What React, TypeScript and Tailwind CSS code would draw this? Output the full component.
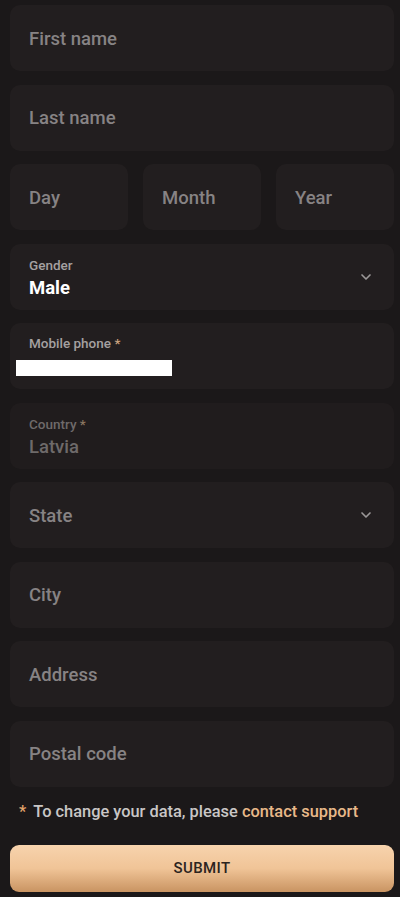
import { ChevronDown } from "lucide-react";

const font = { fontFamily: "Roboto, 'Liberation Sans', sans-serif" };

function Field({ placeholder }: { placeholder: string }) {
  return (
    <div className="h-[66px] rounded-[10px] bg-[#221e1f] flex items-center pl-[19px] pt-[3px]">
      <span className="text-[18.5px] font-medium text-[#878384]">{placeholder}</span>
    </div>
  );
}

function SelectField({ placeholder }: { placeholder: string }) {
  return (
    <div className="h-[66px] rounded-[10px] bg-[#221e1f] flex items-center justify-between pl-[19px] pr-[20px]">
      <span className="pt-[3px] text-[18.5px] font-medium text-[#878384]">{placeholder}</span>
      <ChevronDown size={16} strokeWidth={2.5} className="text-[#9b9898]" />
    </div>
  );
}

export default function App() {
  return (
    <main style={font} className="min-h-[897px] w-[400px] bg-[#1b1819] pl-[10px] pr-[6px] pt-[5px] flex flex-col">
      <div className="flex flex-col gap-[13.5px]">
        <Field placeholder="First name" />
        <Field placeholder="Last name" />
        <div className="grid grid-cols-3 gap-[15px]">
          <Field placeholder="Day" />
          <Field placeholder="Month" />
          <Field placeholder="Year" />
        </div>

        {/* gender select with value */}
        <div className="h-[66px] rounded-[10px] bg-[#221e1f] flex items-center justify-between pl-[19px] pr-[20px]">
          <div className="flex flex-col pt-[3px]">
            <span className="text-[13.5px] font-medium leading-[16px] text-[#a5a1a1]">Gender</span>
            <span className="mt-[3px] text-[18.5px] font-bold leading-[24px] text-white">Male</span>
          </div>
          <ChevronDown size={16} strokeWidth={2.5} className="text-[#9b9898]" />
        </div>

        <div className="h-[66px] rounded-[10px] bg-[#221e1f] flex flex-col pl-[19px] pt-[12px]">
          <span className="text-[13.5px] font-medium leading-[16px] text-[#a5a1a1]">
            Mobile phone <span className="text-[#c9a27e]">*</span>
          </span>
          {/* redacted number */}
          <div className="mt-[9px] -ml-[13px] h-[16px] w-[156px] bg-white" />
        </div>

        <div className="h-[66px] rounded-[10px] bg-[#201c1d] flex flex-col justify-center pl-[19px] pt-[3px]">
          <span className="text-[13.5px] font-medium leading-[16px] text-[#6e6a6a]">
            Country <span className="text-[#8a7560]">*</span>
          </span>
          <span className="mt-[3px] text-[18.5px] font-medium leading-[24px] text-[#6e6a6a]">Latvia</span>
        </div>

        <SelectField placeholder="State" />
        <Field placeholder="City" />
        <Field placeholder="Address" />
        <Field placeholder="Postal code" />
      </div>

      <p className="mt-[15px] pl-[9px] text-[16.4px] font-medium leading-[20px] text-[#c9c6c6]">
        <span className="text-[#e3a46c] mr-[7px]">*</span>
        To change your data, please <span className="text-[#e8b889]">contact support</span>
      </p>

      <button className="mt-[23px] h-[47px] w-full rounded-[9px] bg-gradient-to-b from-[#f7d3ad] via-[#f0c497] to-[#c99462] text-[15px] font-medium tracking-wide text-[#2c2420]">
        SUBMIT
      </button>
    </main>
  );
}
